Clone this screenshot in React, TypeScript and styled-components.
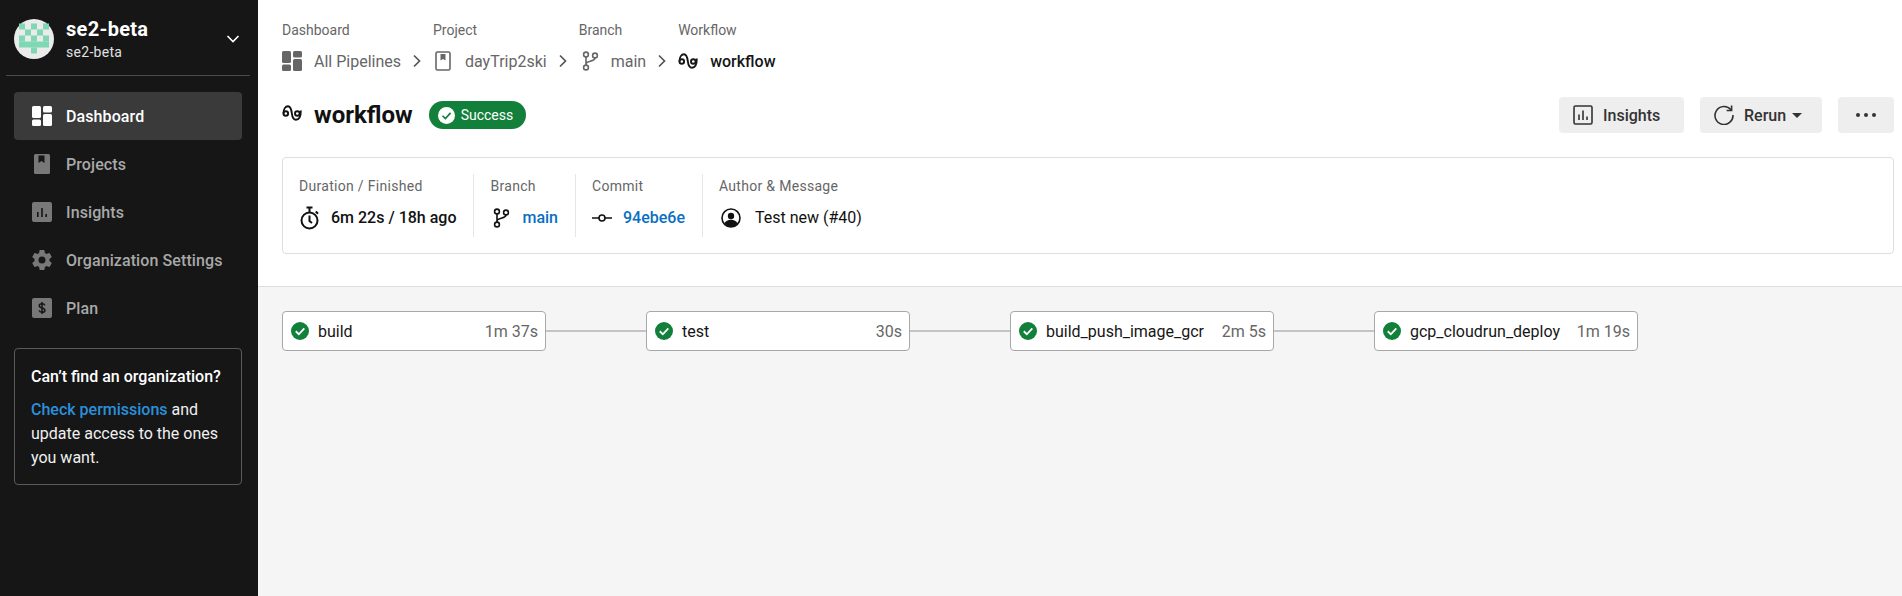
import styled, { createGlobalStyle } from "styled-components";
import { ReactNode } from "react";

const GlobalStyle = createGlobalStyle`
  html, body {
    margin: 0;
    padding: 0;
    height: 100%;
    background: #ffffff;
    font-family: Roboto, "Liberation Sans", sans-serif;
    overflow: hidden;
  }
  #root {
    height: 100%;
  }
  * {
    box-sizing: border-box;
  }
`;

type IconProps = { size?: number; color?: string };

function DashboardIcon({ size = 20, color = "currentColor" }: IconProps) {
  return (
    <svg width={size} height={size} viewBox="0 0 20 20" fill={color}>
      <rect x="0" y="0" width="9" height="12" rx="1.5" />
      <rect x="0" y="13.5" width="9" height="6.5" rx="1.5" />
      <rect x="11" y="0" width="9" height="6.5" rx="1.5" />
      <rect x="11" y="8" width="9" height="12" rx="1.5" />
    </svg>
  );
}

function ProjectSolidIcon({ size = 20, color = "currentColor" }: IconProps) {
  return (
    <svg width={size} height={size} viewBox="0 0 20 20">
      <path
        fill={color}
        d="M3.5 0h13A1.5 1.5 0 0 1 18 1.5v17a1.5 1.5 0 0 1-1.5 1.5h-13A1.5 1.5 0 0 1 2 18.5v-17A1.5 1.5 0 0 1 3.5 0z"
      />
      <path fill="#161616" d="M6.5 1.5h6v7.5l-3-2-3 2z" />
    </svg>
  );
}

function ProjectOutlineIcon({ size = 20, color = "currentColor" }: IconProps) {
  return (
    <svg width={size} height={size} viewBox="0 0 20 20">
      <rect x="3" y="1" width="14" height="18" rx="1.5" fill="none" stroke={color} strokeWidth="1.6" />
      <path fill={color} d="M7.5 3h5v6.5l-2.5-1.6-2.5 1.6z" />
    </svg>
  );
}

function InsightsSolidIcon({ size = 20, color = "currentColor" }: IconProps) {
  return (
    <svg width={size} height={size} viewBox="0 0 20 20">
      <rect width="20" height="20" rx="2" fill={color} />
      <path fill="#161616" d="M5 10h1.6v5H5zM9.2 6h1.6v9H9.2zM13.4 12h1.6v3h-1.6z" />
    </svg>
  );
}

function InsightsOutlineIcon({ size = 20, color = "currentColor" }: IconProps) {
  return (
    <svg width={size} height={size} viewBox="0 0 20 20">
      <rect x="1" y="1" width="18" height="18" rx="1.5" fill="none" stroke={color} strokeWidth="1.6" />
      <path fill={color} d="M5.2 9.5h1.6v5.5H5.2zM9.2 5.5h1.6V15H9.2zM13.2 11.5h1.6V15h-1.6z" />
    </svg>
  );
}

function GearIcon({ size = 20, color = "currentColor" }: IconProps) {
  return (
    <svg width={size} height={size} viewBox="2 2 20 20" fill={color}>
      <path d="M19.43 12.98c.04-.32.07-.64.07-.98s-.03-.66-.07-.98l2.11-1.65c.19-.15.24-.42.12-.64l-2-3.46c-.12-.22-.39-.3-.61-.22l-2.49 1c-.52-.4-1.08-.73-1.69-.98l-.38-2.65A.488.488 0 0 0 14 2h-4c-.25 0-.46.18-.49.42l-.38 2.65c-.61.25-1.17.59-1.69.98l-2.49-1c-.23-.09-.49 0-.61.22l-2 3.46c-.13.22-.07.49.12.64l2.11 1.65c-.04.32-.07.65-.07.98s.03.66.07.98l-2.11 1.65c-.19.15-.24.42-.12.64l2 3.46c.12.22.39.3.61.22l2.49-1c.52.4 1.08.73 1.69.98l.38 2.65c.03.24.24.42.49.42h4c.25 0 .46-.18.49-.42l.38-2.65c.61-.25 1.17-.59 1.69-.98l2.49 1c.23.09.49 0 .61-.22l2-3.46c.12-.22.07-.49-.12-.64l-2.11-1.65zM12 15.5A3.5 3.5 0 1 1 12 8.5a3.5 3.5 0 0 1 0 7z" />
    </svg>
  );
}

function PlanIcon({ size = 20, color = "currentColor" }: IconProps) {
  return (
    <svg width={size} height={size} viewBox="0 0 20 20">
      <rect width="20" height="20" rx="2" fill={color} />
      <path
        d="M12.8 7.4c-.3-1.1-1.4-1.7-2.8-1.7-1.6 0-2.8.8-2.8 2.1 0 2.9 5.7 1.5 5.7 4.4 0 1.3-1.3 2.1-2.9 2.1-1.5 0-2.6-.7-2.9-1.9M10 4v12"
        fill="none"
        stroke="#161616"
        strokeWidth="1.5"
      />
    </svg>
  );
}

function ChevronRight() {
  return (
    <svg width="10" height="14" viewBox="0 0 10 14" fill="none" stroke="#555555" strokeWidth="1.7">
      <path d="M2 1.5 7.5 7 2 12.5" />
    </svg>
  );
}

function BranchIcon({ size = 20, color = "currentColor" }: IconProps) {
  return (
    <svg width={size} height={size} viewBox="-1.5 0 20 20" fill="none" stroke={color} strokeWidth="1.6">
      <circle cx="5.5" cy="3.5" r="2.4" />
      <circle cx="5.5" cy="16.5" r="2.4" />
      <circle cx="14.5" cy="4.5" r="2.4" />
      <path d="M5.5 6v8M5.5 13c0-3 9-2.5 9-6" />
    </svg>
  );
}

function WorkflowIcon({ size = 20, color = "currentColor" }: IconProps) {
  return (
    <svg width={size} height={size} viewBox="0 0 20 20" fill="none" stroke={color} strokeWidth="1.9">
      <circle cx="3.800" cy="10.500" r="2.300" />
      <circle cx="15.300" cy="10.500" r="2.300" />
      <path d="M1.500 10.500C1.500 6 3.500 3.200 6 3.200c2.500 0 3.300 3 3.800 7 .5 4 1.700 6.600 4.200 6.600 3 0 4.800-3.300 4.800-9.300" />
    </svg>
  );
}

function ClockIcon() {
  return (
    <svg width="22" height="24" viewBox="0 0 22 24" fill="none" stroke="#111111" strokeWidth="2">
      <circle cx="10.500" cy="14.500" r="8" />
      <path d="M7.500 1.500h6M10.500 1.500v5M10.500 9.500v5.500l2.500 2" />
      <path d="M16.800 5.500l2.200 2.200" />
    </svg>
  );
}

function CommitIcon() {
  return (
    <svg width="20" height="12" viewBox="0 0 20 12" fill="none" stroke="#111111" strokeWidth="1.6">
      <circle cx="10" cy="6" r="3" />
      <path d="M0 6h7M13 6h7" />
    </svg>
  );
}

function AuthorIcon() {
  return (
    <svg width="24" height="24" viewBox="-2 -2 24 24">
      <circle cx="10" cy="10" r="9" fill="#fff" stroke="#111111" strokeWidth="1.6" />
      <circle cx="10" cy="8" r="3.200" fill="#111111" />
      <path fill="#111111" d="M3.500 15.500c1-2.500 3.500-3.700 6.500-3.700s5.500 1.200 6.500 3.700A9 9 0 0 1 10 19a9 9 0 0 1-6.500-3.500z" />
    </svg>
  );
}

function RerunIcon() {
  return (
    <svg width="20" height="20" viewBox="0 0 20 20" fill="none" stroke="#333333" strokeWidth="1.6">
      <path d="M17 4.800A9 9 0 1 0 19 10" />
      <path d="M17.600 0.500v5h-5" />
    </svg>
  );
}

function CheckBadge({ size = 18, bg = "#12803a", tick = "#ffffff" }: { size?: number; bg?: string; tick?: string }) {
  return (
    <svg width={size} height={size} viewBox="0 0 20 20">
      <circle cx="10" cy="10" r="10" fill={bg} />
      <path d="M5.300 10.300 8.700 13.600 14.800 7" fill="none" stroke={tick} strokeWidth="2" />
    </svg>
  );
}

const avatarCells: [number, number][] = [
  [0, 0], [2, 0], [4, 0],
  [1, 1], [3, 1],
  [0, 2], [2, 2], [4, 2],
  [0, 3], [1, 3], [2, 3], [3, 3], [4, 3],
  [2, 4],
];

function Avatar() {
  return (
    <svg width="40" height="40" viewBox="0 0 40 40">
      <circle cx="20" cy="20" r="20" fill="#ebebeb" />
      {avatarCells.map(([x, y]) => (
        <rect key={`${x}-${y}`} x={5 + x * 6} y={4.5 + y * 6} width="6" height="6" fill="#7ed8b4" />
      ))}
    </svg>
  );
}

const Layout = styled.div`
  display: flex;
  height: 100%;
  min-height: 596px;
`;

const Sidebar = styled.aside`
  width: 258px;
  flex-shrink: 0;
  background: #161616;
  color: #ffffff;
  padding: 0 8px 0 6px;
  display: flex;
  flex-direction: column;
`;

const OrgHeader = styled.div`
  height: 76px;
  display: flex;
  align-items: center;
  padding: 2px 8px 0;
  gap: 12px;
  border-bottom: 1px solid #4a4a4a;
`;

const OrgText = styled.div`
  flex: 1;
  display: flex;
  flex-direction: column;
  gap: 3px;
`;

const OrgName = styled.div`
  font-size: 20px;
  font-weight: 700;
  line-height: 24px;
  letter-spacing: 0.3px;
`;

const OrgSub = styled.div`
  font-size: 14px;
  line-height: 16px;
  letter-spacing: 0.3px;
  color: #e0e0e0;
`;

const Caret = styled.svg`
  margin-right: 2px;
`;

const NavList = styled.nav`
  margin-top: 16px;
  display: flex;
  flex-direction: column;
  padding: 0 8px;
`;

const NavItem = styled.div<{ $active?: boolean }>`
  height: 48px;
  display: flex;
  align-items: center;
  gap: 14px;
  padding-left: 18px;
  border-radius: 4px;
  font-size: 16px;
  font-weight: 500;
  letter-spacing: 0.1px;
  background: ${({ $active }) => ($active ? "#3a3a3a" : "transparent")};
  color: ${({ $active }) => ($active ? "#ffffff" : "#a8a8a8")};
  svg {
    color: ${({ $active }) => ($active ? "#ffffff" : "#787878")};
    flex-shrink: 0;
  }
`;

const HelpCard = styled.div`
  margin: 16px 8px 0;
  height: 137px;
  padding: 18px 16px 0;
  border: 1px solid #5a5a5a;
  border-radius: 4px;
  font-size: 16px;
  line-height: 24px;
  color: #f0f0f0;
`;

const HelpTitle = styled.div`
  font-weight: 500;
  color: #ffffff;
  margin-bottom: 11px;
  line-height: 20px;
`;

const HelpLink = styled.span`
  color: #2a90dc;
  font-weight: 500;
`;

const Main = styled.main`
  flex: 1;
  min-width: 0;
  display: flex;
  flex-direction: column;
`;

const TopSection = styled.section`
  height: 287px;
  padding: 22px 8px 0 24px;
  border-bottom: 1px solid #dedede;
`;

const Crumbs = styled.div`
  display: flex;
  align-items: flex-end;
`;

const Crumb = styled.div`
  display: flex;
  flex-direction: column;
  gap: 11px;
`;

const CrumbLabel = styled.div`
  font-size: 14px;
  line-height: 16px;
  color: #666666;
`;

const CrumbValue = styled.div<{ $current?: boolean }>`
  display: flex;
  align-items: center;
  gap: 12px;
  height: 24px;
  font-size: 16px;
  font-weight: ${({ $current }) => ($current ? 500 : 400)};
  color: ${({ $current }) => ($current ? "#161616" : "#666666")};
`;

const CrumbSep = styled.div`
  height: 24px;
  display: flex;
  align-items: center;
  margin: 0 11px;
`;

const TitleRow = styled.div`
  margin-top: 24px;
  height: 36px;
  display: flex;
  align-items: center;
  gap: 16px;
`;

const TitleGroup = styled.div`
  display: flex;
  align-items: center;
  gap: 12px;
  color: #111111;
  svg {
    margin-bottom: 4px;
  }
`;

const Title = styled.h1`
  margin: 0;
  font-size: 24px;
  font-weight: 700;
  line-height: 28px;
`;

const Badge = styled.div`
  height: 28px;
  padding: 0 13px 0 9px;
  display: flex;
  align-items: center;
  gap: 6px;
  border-radius: 14px;
  background: #12803a;
  color: #ffffff;
  font-size: 14px;
`;

const Actions = styled.div`
  margin-left: auto;
  display: flex;
  gap: 16px;
`;

const ActionButton = styled.div<{ $width: number }>`
  width: ${({ $width }) => $width}px;
  height: 36px;
  display: flex;
  align-items: center;
  gap: 10px;
  padding-left: 14px;
  border-radius: 4px;
  background: #eeeeee;
  color: #333333;
  font-size: 16px;
  font-weight: 500;
`;

const MoreButton = styled(ActionButton)`
  justify-content: center;
  padding-left: 0;
`;

const Dropdown = styled.span`
  width: 0;
  height: 0;
  border-left: 5px solid transparent;
  border-right: 5px solid transparent;
  border-top: 5px solid #333333;
  margin-left: -4px;
`;

const Dots = styled.div`
  display: flex;
  gap: 4px;
`;

const Dot = styled.span`
  width: 4px;
  height: 4px;
  border-radius: 50%;
  background: #333333;
`;

const InfoCard = styled.div`
  margin-top: 24px;
  height: 97px;
  display: flex;
  align-items: center;
  border: 1px solid #dedede;
  border-radius: 4px;
  padding-left: 16px;
`;

const InfoCell = styled.div`
  height: 63px;
  display: flex;
  flex-direction: column;
  justify-content: center;
  gap: 12px;
  padding: 0 17px 4px 0;
  & + & {
    padding-left: 16px;
    border-left: 1px solid #e6e6e6;
  }
`;

const InfoLabel = styled.div`
  font-size: 14px;
  line-height: 16px;
  letter-spacing: 0.3px;
  color: #666666;
`;

const InfoValue = styled.div<{ $gap: number }>`
  height: 24px;
  display: flex;
  align-items: center;
  gap: ${({ $gap }) => $gap}px;
  font-size: 16px;
  color: #111111;
`;

const Strong = styled.span`
  font-weight: 500;
`;

const CodeLink = styled.span`
  color: #0a6fc2;
  font-weight: 500;
`;

const Canvas = styled.section`
  flex: 1;
  background: #f5f5f5;
  padding: 24px;
`;

const Pipeline = styled.div`
  display: flex;
  align-items: center;
`;

const JobNode = styled.div`
  width: 264px;
  height: 40px;
  display: flex;
  align-items: center;
  gap: 9px;
  padding: 0 7px 0 8px;
  background: #ffffff;
  border: 1px solid #a8a8a8;
  border-radius: 4px;
  font-size: 16px;
`;

const JobName = styled.span`
  flex: 1;
  color: #161616;
`;

const JobTime = styled.span`
  color: #666666;
`;

const Connector = styled.div`
  width: 100px;
  height: 2px;
  background: #c4c4c4;
`;

const navItems: { label: string; icon: ReactNode; active?: boolean }[] = [
  { label: "Dashboard", icon: <DashboardIcon />, active: true },
  { label: "Projects", icon: <ProjectSolidIcon /> },
  { label: "Insights", icon: <InsightsSolidIcon /> },
  { label: "Organization Settings", icon: <GearIcon /> },
  { label: "Plan", icon: <PlanIcon /> },
];

const jobs = [
  { name: "build", time: "1m 37s" },
  { name: "test", time: "30s" },
  { name: "build_push_image_gcr", time: "2m 5s" },
  { name: "gcp_cloudrun_deploy", time: "1m 19s" },
];

export default function App() {
  return (
    <>
      <GlobalStyle />
      <Layout>
        <Sidebar>
          <OrgHeader>
            <Avatar />
            <OrgText>
              <OrgName>se2-beta</OrgName>
              <OrgSub>se2-beta</OrgSub>
            </OrgText>
            <Caret width="14" height="14" viewBox="0 0 14 14" fill="none" stroke="#ffffff" strokeWidth="1.6">
              <path d="M1.500 4 7 9.500 12.500 4" />
            </Caret>
          </OrgHeader>
          <NavList>
            {navItems.map((item) => (
              <NavItem key={item.label} $active={item.active}>
                {item.icon}
                {item.label}
              </NavItem>
            ))}
          </NavList>
          <HelpCard>
            <HelpTitle>Can’t find an organization?</HelpTitle>
            <HelpLink>Check permissions</HelpLink> and update access to the ones you want.
          </HelpCard>
        </Sidebar>
        <Main>
          <TopSection>
            <Crumbs>
              <Crumb>
                <CrumbLabel>Dashboard</CrumbLabel>
                <CrumbValue>
                  <DashboardIcon />
                  All Pipelines
                </CrumbValue>
              </Crumb>
              <CrumbSep>
                <ChevronRight />
              </CrumbSep>
              <Crumb>
                <CrumbLabel>Project</CrumbLabel>
                <CrumbValue>
                  <ProjectOutlineIcon />
                  dayTrip2ski
                </CrumbValue>
              </Crumb>
              <CrumbSep>
                <ChevronRight />
              </CrumbSep>
              <Crumb>
                <CrumbLabel>Branch</CrumbLabel>
                <CrumbValue>
                  <BranchIcon />
                  main
                </CrumbValue>
              </Crumb>
              <CrumbSep>
                <ChevronRight />
              </CrumbSep>
              <Crumb>
                <CrumbLabel>Workflow</CrumbLabel>
                <CrumbValue $current>
                  <WorkflowIcon />
                  workflow
                </CrumbValue>
              </Crumb>
            </Crumbs>
            <TitleRow>
              <TitleGroup>
                <WorkflowIcon />
                <Title>workflow</Title>
              </TitleGroup>
              <Badge>
                <CheckBadge size={17} bg="#ffffff" tick="#12803a" />
                Success
              </Badge>
              <Actions>
                <ActionButton $width={125}>
                  <InsightsOutlineIcon />
                  Insights
                </ActionButton>
                <ActionButton $width={122}>
                  <RerunIcon />
                  Rerun
                  <Dropdown />
                </ActionButton>
                <MoreButton $width={56}>
                  <Dots>
                    <Dot />
                    <Dot />
                    <Dot />
                  </Dots>
                </MoreButton>
              </Actions>
            </TitleRow>
            <InfoCard>
              <InfoCell>
                <InfoLabel>Duration / Finished</InfoLabel>
                <InfoValue $gap={10}>
                  <ClockIcon />
                  <Strong>6m 22s / 18h ago</Strong>
                </InfoValue>
              </InfoCell>
              <InfoCell>
                <InfoLabel>Branch</InfoLabel>
                <InfoValue $gap={12}>
                  <BranchIcon />
                  <CodeLink>main</CodeLink>
                </InfoValue>
              </InfoCell>
              <InfoCell>
                <InfoLabel>Commit</InfoLabel>
                <InfoValue $gap={11}>
                  <CommitIcon />
                  <CodeLink>94ebe6e</CodeLink>
                </InfoValue>
              </InfoCell>
              <InfoCell>
                <InfoLabel>Author &amp; Message</InfoLabel>
                <InfoValue $gap={12}>
                  <AuthorIcon />
                  Test new (#40)
                </InfoValue>
              </InfoCell>
            </InfoCard>
          </TopSection>
          <Canvas>
            <Pipeline>
              {jobs.map((job, index) => (
                <Pipeline key={job.name}>
                  {index > 0 && <Connector />}
                  <JobNode>
                    <CheckBadge />
                    <JobName>{job.name}</JobName>
                    <JobTime>{job.time}</JobTime>
                  </JobNode>
                </Pipeline>
              ))}
            </Pipeline>
          </Canvas>
        </Main>
      </Layout>
    </>
  );
}
